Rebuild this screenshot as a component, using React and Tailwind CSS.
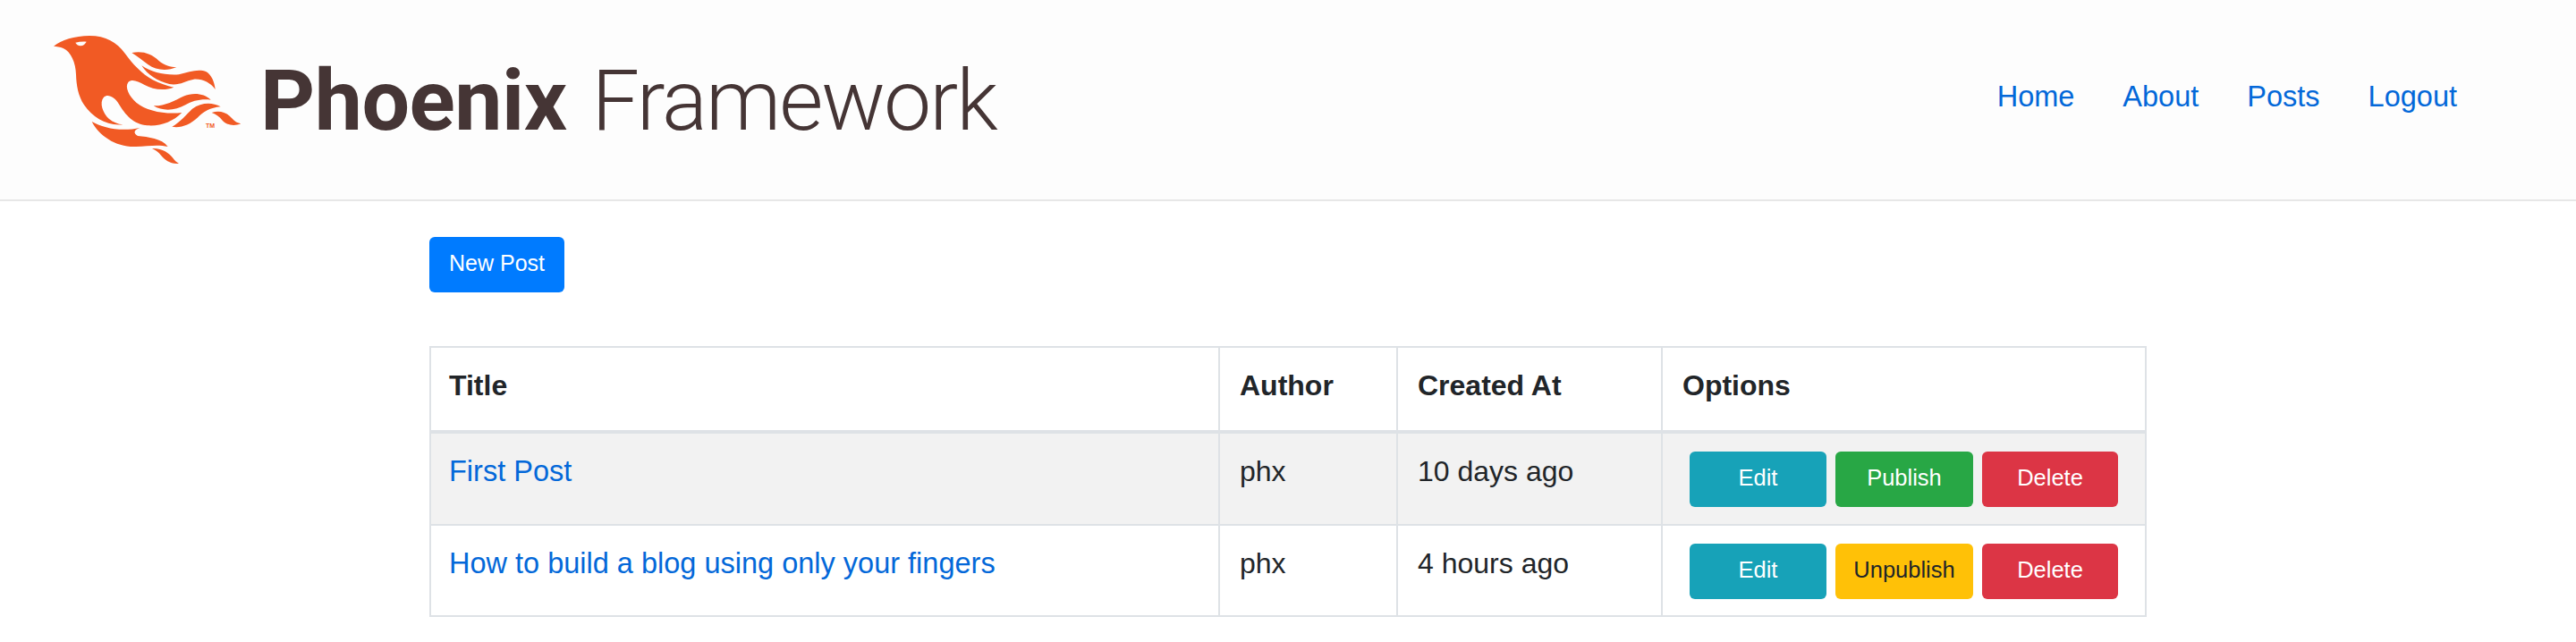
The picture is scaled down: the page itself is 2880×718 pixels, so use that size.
import React from 'react'

const ORANGE = '#f15a24'

const PhoenixMark = () => (
    <svg viewBox="180 120 630 432" className="w-[210px] h-[144px] shrink-0" aria-hidden="true">
        <path
            fill={ORANGE}
            d="M180 155C205 135 250 120 300 120C355 120 392 142 418 178C445 215 475 248 512 268C535 280 560 288 583 293C550 306 512 300 485 285C462 272 442 264 430 276C418 292 432 322 457 344C492 372 550 384 610 378C580 408 540 424 495 421C448 418 420 385 398 348C385 326 362 314 348 326C332 344 345 380 365 398C380 410 395 416 412 418C358 424 312 394 282 352C262 322 256 285 255 250C254 212 238 172 212 162C202 157 190 156 180 155Z"
        />
        <path fill="#fdfdfd" d="M253 143C265 140 278 139 290 140C285 148 280 153 270 154C262 153 256 149 253 143Z" />
        <path fill={ORANGE} d="M442 177C478 170 508 180 532 203C552 220 572 225 592 225C560 240 522 235 497 217C478 203 460 188 442 177Z" />
        <path fill={ORANGE} d="M475 220C510 243 552 253 600 250C635 240 668 230 692 241C710 252 719 275 722 300C705 277 680 264 650 266C620 272 600 288 568 282C528 272 495 252 475 220Z" />
        <path fill={ORANGE} d="M515 355C552 356 585 338 615 323C648 310 684 313 707 335C675 331 645 338 622 352C587 372 545 374 515 355Z" />
        <path fill={ORANGE} d="M577 425C605 410 625 383 645 365C675 343 712 342 740 358C705 361 682 375 662 395C637 418 605 431 577 425Z" />
        <path fill={ORANGE} d="M710 378C737 368 762 378 777 396C787 408 797 413 808 415C785 424 760 420 746 404C736 392 725 383 710 378Z" />
        <path fill={ORANGE} d="M308 408C345 430 410 443 470 428C450 435 445 446 462 456C497 460 542 464 563 492C530 484 500 490 455 492C388 494 333 456 308 408Z" />
        <path fill={ORANGE} d="M510 498C542 496 567 513 580 530C586 539 593 545 600 548C575 552 553 537 540 521C532 511 522 503 510 498Z" />
        <text x="690" y="428" fill={ORANGE} fontSize="21" fontWeight="700" fontFamily="'Liberation Sans', sans-serif">TM</text>
    </svg>
)

const Wordmark = () => (
    <div className="flex items-baseline ml-[21px] gap-[28px] font-['Roboto',sans-serif] text-[95px] leading-none text-[#453535]">
        <span className="font-bold tracking-[-0.5px]">Phoenix</span>
        <span className="font-light tracking-[-2px]">Framework</span>
    </div>
)

const navLinks = ['Home', 'About', 'Posts', 'Logout']

const Btn = ({ color, children }) => (
    <button className={`h-[62px] pb-[3px] rounded-[6px] text-[25.5px] leading-none ${color}`}>{children}</button>
)

const posts = [
    { title: 'First Post', author: 'phx', created: '10 days ago', publish: 'Publish', publishColor: 'bg-[#28a745] text-white', height: 'bg-[#f2f2f2] h-[104px]' },
    { title: 'How to build a blog using only your fingers', author: 'phx', created: '4 hours ago', publish: 'Unpublish', publishColor: 'bg-[#ffc107] text-[#212529]', height: 'h-[102px]' }
]

const cell = 'border-2 border-[#dee2e6] px-[22px] pt-[18px] align-top'
const head = 'border-2 border-b-[4px] border-[#dee2e6] px-[22px] pt-[18px] pb-0 h-[95px] text-left align-top font-bold'

export default function App() {
    return (
        <div className="min-h-[718px] bg-white font-['Liberation_Sans',Arial,sans-serif] text-[32px] leading-[48px] text-[#212529]">
            <header className="h-[225px] bg-[#fdfdfd] border-b-2 border-[#e7e7e7] flex items-start justify-between pl-[60px] pr-[133px]">
                <div className="flex items-center mt-[40px]">
                    <PhoenixMark />
                    <Wordmark />
                </div>
                <nav className="flex gap-[54px] mt-[84px] text-[32.5px] text-[#0368d9]">
                    {navLinks.map(link => (
                        <a key={link} href="#">{link}</a>
                    ))}
                </nav>
            </header>

            <main className="mx-auto w-[1920px] pt-[40px]">
                <button className="block w-[151px] h-[62px] pb-[3px] rounded-[6px] bg-[#007bff] text-white text-[25px] leading-none">New Post</button>

                <table className="mt-[60px] w-full table-fixed border-collapse">
                    <colgroup>
                        <col className="w-[882px]" />
                        <col className="w-[199px]" />
                        <col className="w-[296px]" />
                        <col />
                    </colgroup>
                    <thead>
                        <tr>
                            <th className={`${head} pl-[20px]`}>Title</th>
                            <th className={head}>Author</th>
                            <th className={head}>Created At</th>
                            <th className={head}>Options</th>
                        </tr>
                    </thead>
                    <tbody>
                        {posts.map(post => (
                            <tr key={post.title} className={post.height}>
                                <td className={`${cell} pl-[20px]`}><a href="#" className="text-[32.5px] text-[#0368d9]">{post.title}</a></td>
                                <td className={cell}>{post.author}</td>
                                <td className={cell}>{post.created}</td>
                                <td className={`${cell} pt-[20px] pl-[30px]`}>
                                    <div className="flex gap-[10px]">
                                        <Btn color="w-[153px] bg-[#17a2b8] text-white">Edit</Btn>
                                        <Btn color={`w-[154px] ${post.publishColor}`}>{post.publish}</Btn>
                                        <Btn color="w-[152px] bg-[#dc3545] text-white">Delete</Btn>
                                    </div>
                                </td>
                            </tr>
                        ))}
                    </tbody>
                </table>
            </main>
        </div>
    )
}
